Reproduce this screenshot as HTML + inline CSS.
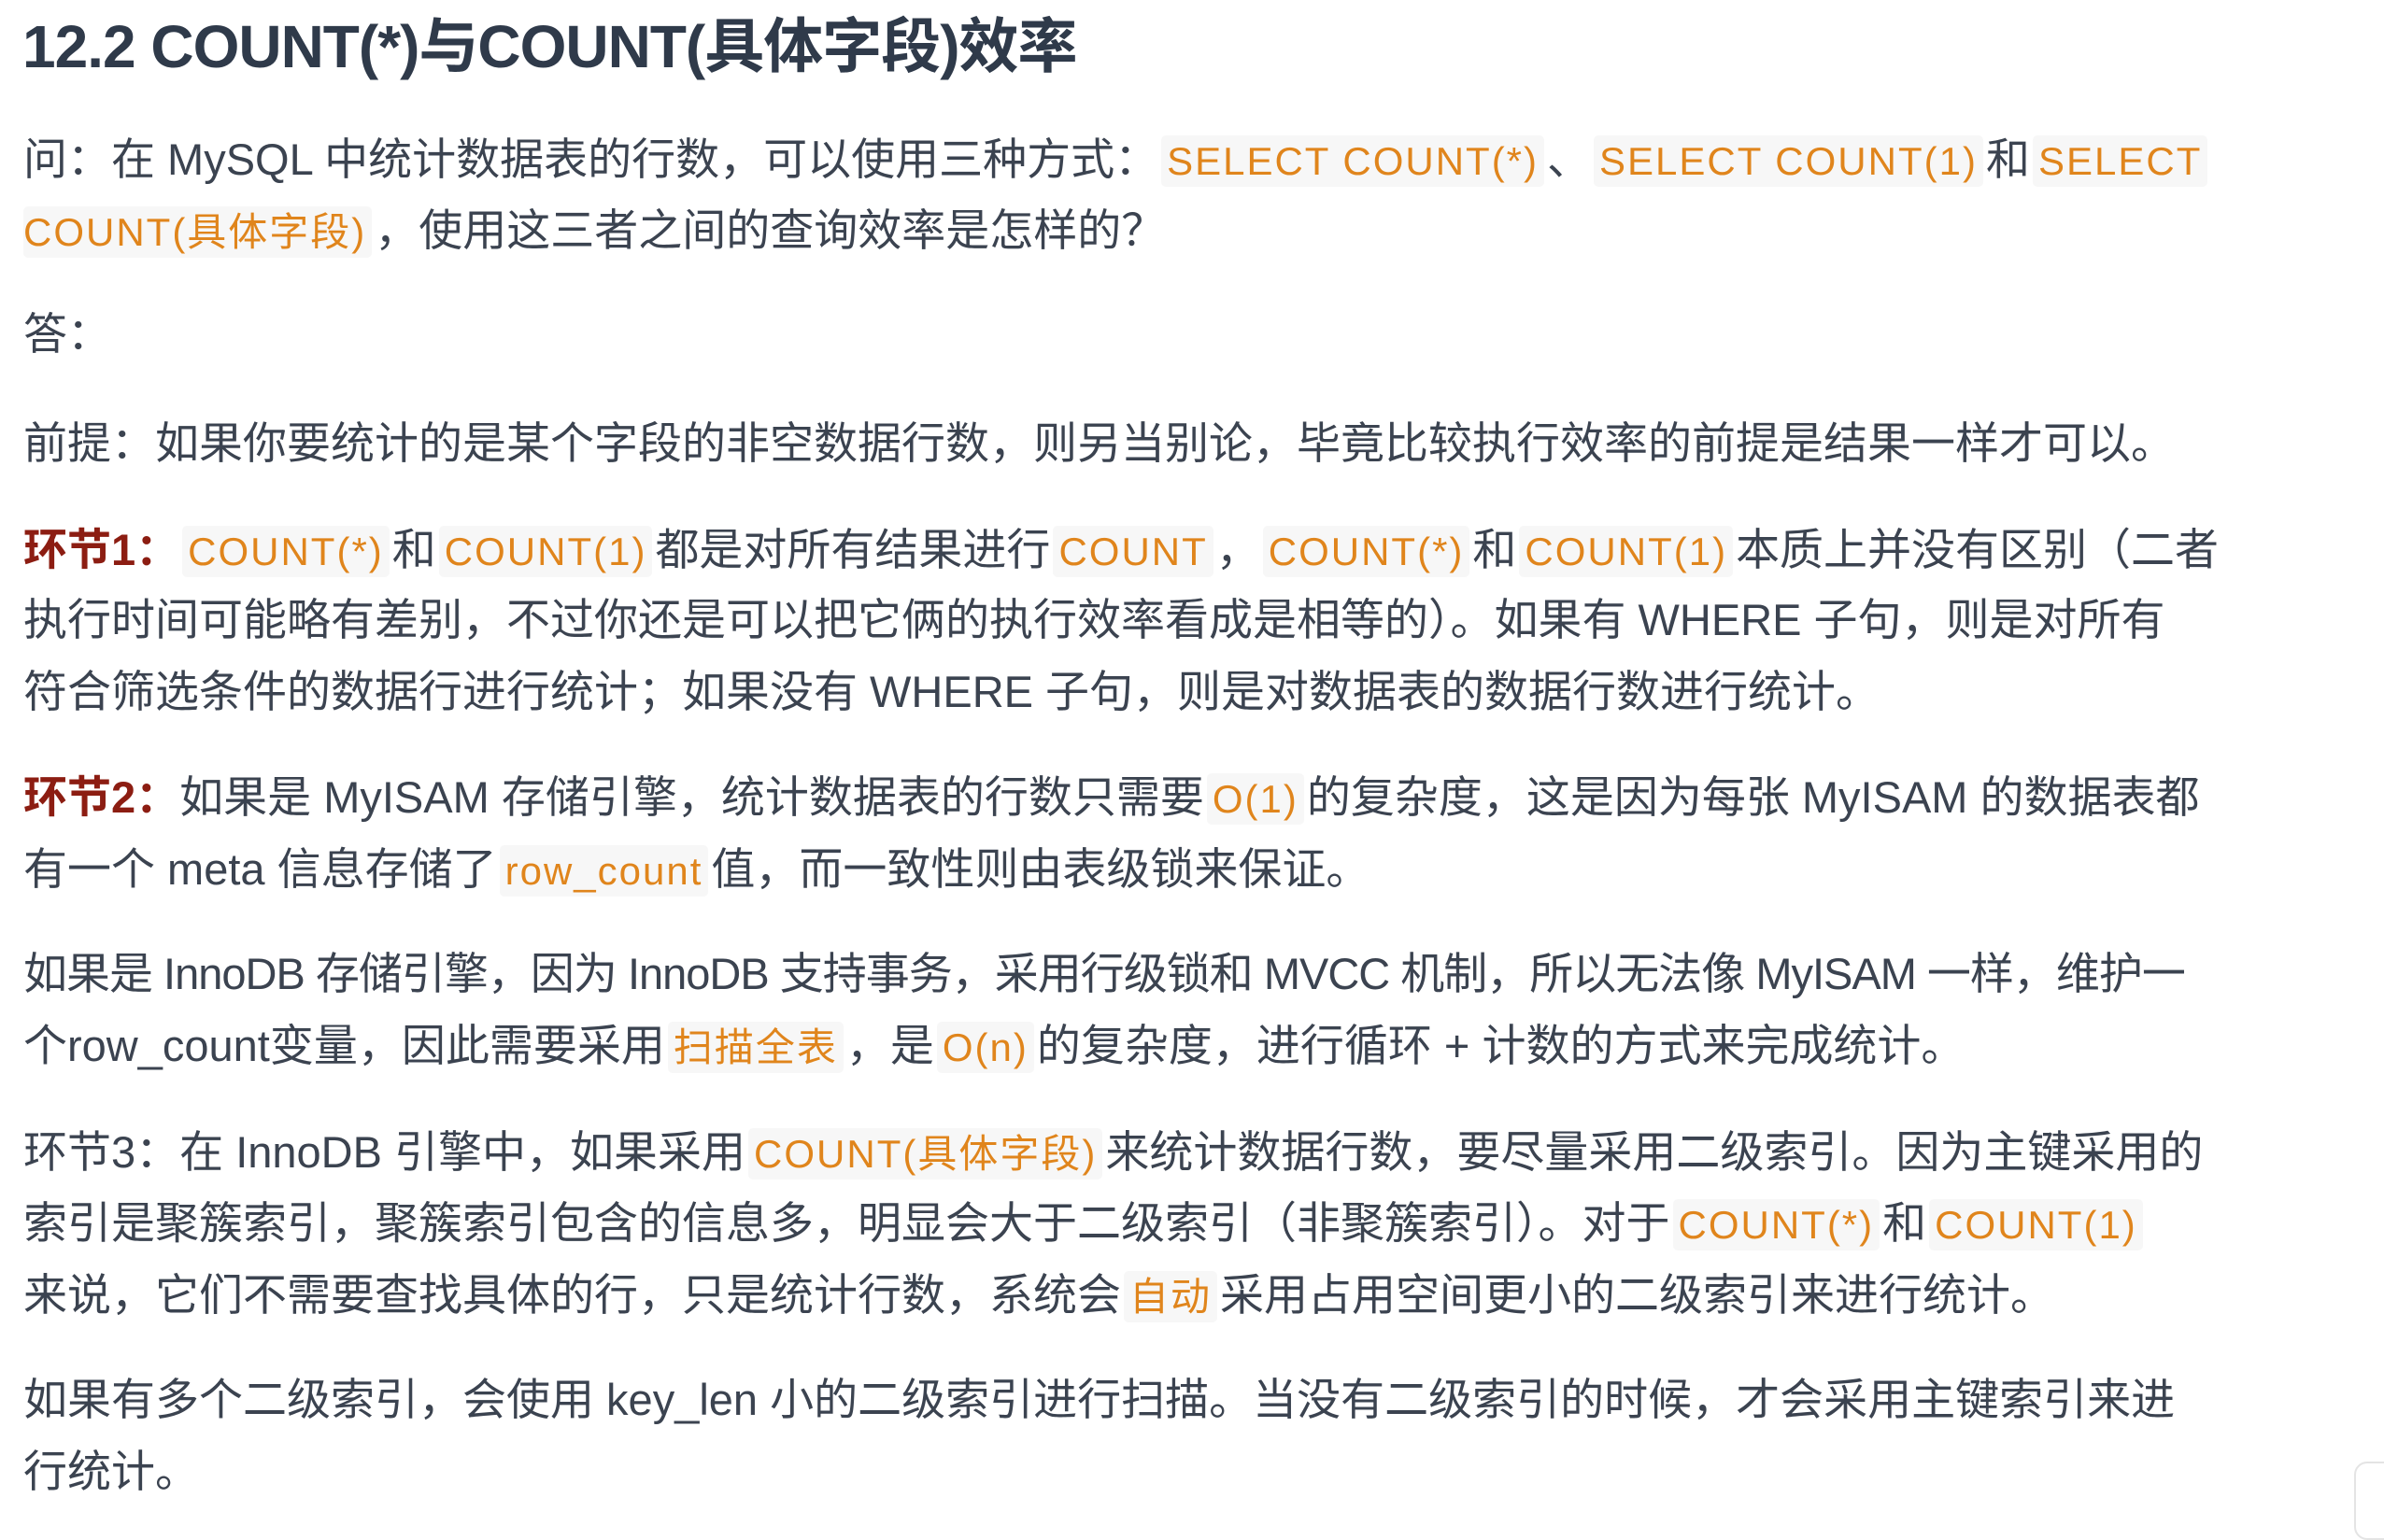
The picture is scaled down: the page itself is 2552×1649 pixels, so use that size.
<!DOCTYPE html>
<html><head><meta charset="utf-8"><style>
html,body{margin:0;padding:0;background:#fff;}
body{width:2552px;height:1623px;position:relative;overflow:hidden;font-family:"Liberation Sans","Noto Sans CJK SC",sans-serif;color:#3b4350;}
.l{position:absolute;left:25px;white-space:nowrap;font-size:47px;line-height:76px;height:76px;}
h1{position:absolute;left:24px;top:8px;margin:0;font-size:64px;line-height:84px;font-weight:bold;color:#2f3a4a;white-space:nowrap;letter-spacing:-1px;}
code{font-family:"Liberation Sans","Noto Sans CJK SC",sans-serif;font-size:42px;letter-spacing:2px;color:#e0851c;background:#f7f7f7;padding:4px 6px;margin:0 3px;border-radius:5px;}
b.r{color:#8c1d12;}
</style></head><body>
<h1>12.2 COUNT(*)与COUNT(具体字段)效率</h1>
<div class="l" style="top:133px">问：在 MySQL 中统计数据表的行数，可以使用三种方式：<code>SELECT COUNT(*)</code>、<code>SELECT COUNT(1)</code>和<code>SELECT</code></div>
<div class="l" style="top:209px"><code style="padding-left:0;margin-left:0">COUNT(具体字段)</code>，使用这三者之间的查询效率是怎样的？</div>
<div class="l" style="top:320px">答：</div>
<div class="l" style="top:437px">前提：如果你要统计的是某个字段的非空数据行数，则另当别论，毕竟比较执行效率的前提是结果一样才可以。</div>
<div class="l" style="top:551px"><b class="r">环节1：</b><code>COUNT(*)</code>和<code>COUNT(1)</code>都是对所有结果进行<code>COUNT</code>，<code>COUNT(*)</code>和<code>COUNT(1)</code>本质上并没有区别（二者</div>
<div class="l" style="top:626px">执行时间可能略有差别，不过你还是可以把它俩的执行效率看成是相等的）。如果有 WHERE 子句，则是对所有</div>
<div class="l" style="top:703px">符合筛选条件的数据行进行统计；如果没有 WHERE 子句，则是对数据表的数据行数进行统计。</div>
<div class="l" style="top:816px"><b class="r">环节2：</b>如果是 MyISAM 存储引擎，统计数据表的行数只需要<code>O(1)</code>的复杂度，这是因为每张 MyISAM 的数据表都</div>
<div class="l" style="top:893px">有一个 meta 信息存储了<code>row_count</code>值，而一致性则由表级锁来保证。</div>
<div class="l" style="top:1005px;letter-spacing:-1px">如果是 InnoDB 存储引擎，因为 InnoDB 支持事务，采用行级锁和 MVCC 机制，所以无法像 MyISAM 一样，维护一</div>
<div class="l" style="top:1082px">个row_count变量，因此需要采用<code>扫描全表</code>，是<code>O(n)</code>的复杂度，进行循环 + 计数的方式来完成统计。</div>
<div class="l" style="top:1196px">环节3：在 InnoDB 引擎中，如果采用<code>COUNT(具体字段)</code>来统计数据行数，要尽量采用二级索引。因为主键采用的</div>
<div class="l" style="top:1272px">索引是聚簇索引，聚簇索引包含的信息多，明显会大于二级索引（非聚簇索引）。对于<code>COUNT(*)</code>和<code>COUNT(1)</code></div>
<div class="l" style="top:1349px">来说，它们不需要查找具体的行，只是统计行数，系统会<code>自动</code>采用占用空间更小的二级索引来进行统计。</div>
<div class="l" style="top:1461px">如果有多个二级索引，会使用 key_len 小的二级索引进行扫描。当没有二级索引的时候，才会采用主键索引来进</div>
<div class="l" style="top:1538px">行统计。</div>
<div style="position:absolute;left:2520px;top:1565px;width:60px;height:80px;border:2px solid #e4e4e4;border-radius:14px;background:#fff;"></div>
</body></html>
